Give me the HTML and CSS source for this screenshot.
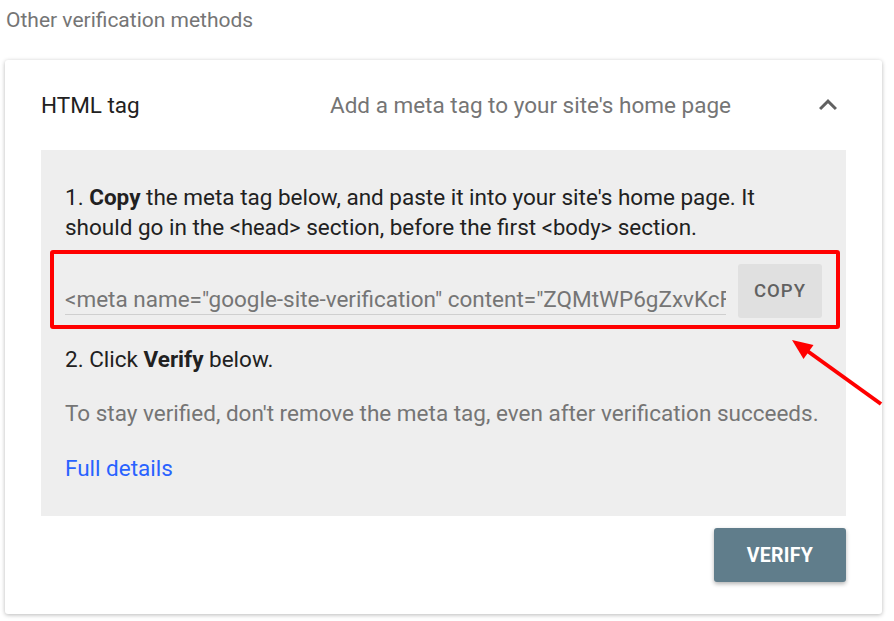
FILE: index.html
```html
<!DOCTYPE html>
<html lang="en">
<head>
<meta charset="utf-8">
<title>Other verification methods</title>
<link rel="stylesheet" href="styles.css">
</head>
<body>
<div class="page">
  <div class="section-title">Other verification methods</div>
  <div class="card">
    <div class="card-header">
      <div class="method">HTML tag</div>
      <div class="method-desc">Add a meta tag to your site's home page</div>
      <svg class="chevron" viewBox="0 0 24 24" width="36" height="36" aria-hidden="true"><path d="M12 8l-6 6 1.41 1.41L12 10.83l4.59 4.58L18 14z"/></svg>
    </div>
    <div class="panel">
      <p class="step">1. <b>Copy</b> the meta tag below, and paste it into your site's home page. It should go in the <code>&lt;head&gt;</code> section, before the first <code>&lt;body&gt;</code> section.</p>
      <div class="copy-row">
        <div class="meta-field">&lt;meta name="google-site-verification" content="ZQMtWP6gZxvKcFq3rT9yLs2" /&gt;</div>
        <button class="copy-btn">COPY</button>
        <span class="highlight"></span>
      </div>
      <p class="step step-two">2. Click <b>Verify</b> below.</p>
      <p class="note">To stay verified, don't remove the meta tag, even after verification succeeds.</p>
      <a class="details-link" href="#">Full details</a>
    </div>
    <div class="actions">
      <button class="verify-btn">VERIFY</button>
    </div>
  </div>
  <svg class="arrow" width="894" height="621" viewBox="0 0 894 621" aria-hidden="true">
    <line x1="881" y1="404" x2="806" y2="350" stroke="#ff0000" stroke-width="4"/>
    <polygon points="792,340 813.5,345 803.5,359" fill="#ff0000"/>
  </svg>
</div>
</body>
</html>
```
FILE: styles.css
```css
* { box-sizing: border-box; }
html, body { margin: 0; padding: 0; background: #ffffff; }
body {
  font-family: Roboto, "Liberation Sans", Arial, sans-serif;
  color: #212121;
  width: 894px;
  height: 621px;
  overflow: hidden;
}
.page { position: relative; width: 894px; height: 621px; }

.section-title {
  padding: 5px 0 0 6px;
  font-size: 21px;
  line-height: 30px;
  color: #757575;
}

.card {
  margin: 25px 0 0 5px;
  width: 877px;
  background: #ffffff;
  border-radius: 3px;
  box-shadow: 0 1px 4px rgba(0,0,0,0.28);
  padding: 0 36px 32px 36px;
}

.card-header {
  height: 90px;
  display: flex;
  align-items: center;
  font-size: 22.5px;
}
.method { width: 289px; color: #212121; }
.method-desc { flex: 1; color: #757575; }
.chevron { fill: #616161; flex: none; }

.panel {
  background: #eeeeee;
  padding: 32px 24px 33px 24px;
  font-size: 22.5px;
  line-height: 30px;
}
.step { margin: 0; color: #212121; }
.step b { font-weight: 700; }
.step code { font-family: Roboto, "Liberation Sans", Arial, sans-serif; font-size: 22px; }

.copy-row {
  position: relative;
  margin-top: 21px;
  height: 54px;
  display: flex;
  align-items: flex-end;
  gap: 12px;
}
.meta-field {
  flex: 1;
  min-width: 0;
  height: 31px;
  margin-bottom: 3px;
  white-space: nowrap;
  overflow: hidden;
  color: #757575;
  border-bottom: 1px solid #cfcfcf;
  line-height: 30px;
}
.copy-btn {
  align-self: stretch;
  width: 84px;
  border: none;
  border-radius: 3px;
  background: #e0e0e0;
  color: #616161;
  font-family: Roboto, "Liberation Sans", Arial, sans-serif;
  font-size: 18.5px;
  font-weight: 500;
  letter-spacing: 1px;
  padding: 0;
}
.highlight {
  position: absolute;
  top: -14px;
  left: -15px;
  right: -18px;
  bottom: -11px;
  border: 4px solid #ff0000;
  border-radius: 3px;
  pointer-events: none;
}

.step-two { margin-top: 26px; }
.note { margin: 24px 0 0 0; color: #757575; }
.details-link {
  display: block;
  margin-top: 25px;
  color: #2962ff;
  text-decoration: none;
}

.actions {
  display: flex;
  justify-content: flex-end;
  margin-top: 12px;
}
.verify-btn {
  width: 132px;
  height: 54px;
  border: none;
  border-radius: 3px;
  background: #607d8b;
  color: #ffffff;
  font-family: Roboto, "Liberation Sans", Arial, sans-serif;
  font-size: 19.5px;
  font-weight: 700;
  letter-spacing: 0.3px;
  box-shadow: 0 2px 4px rgba(0,0,0,0.3);
}

.arrow {
  position: absolute;
  left: 0;
  top: 0;
  pointer-events: none;
}
```
